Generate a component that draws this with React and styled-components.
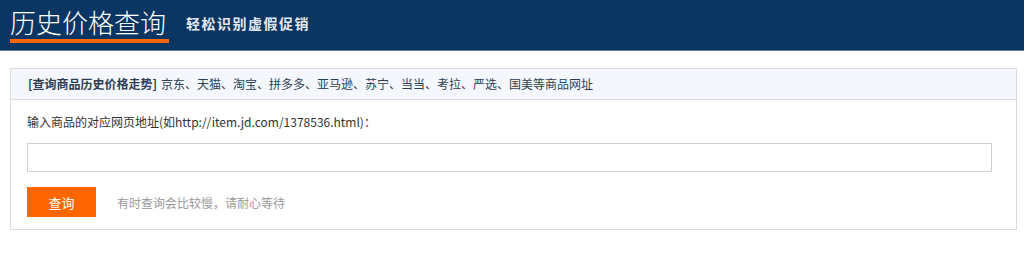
import React from "react";
import styled, { createGlobalStyle } from "styled-components";

const GlobalStyle = createGlobalStyle`
  body {
    margin: 0;
    background: #fff;
    font-family: "Noto Sans CJK SC", "Noto Sans", sans-serif;
    color: #333;
  }
`;

const TopBar = styled.div`
  height: 50px;
  background-color: #0b3562;
  border-bottom: 1px solid #5d7898;
  display: flex;
  align-items: flex-start;
  padding-left: 10px;
`;

const Title = styled.h1`
  margin: 0;
  padding: 7px 3px 2px 0;
  font-size: 26px;
  line-height: 30px;
  font-weight: 300;
  color: #fff;
  border-bottom: 4px solid #ff6600;
`;

const Slogan = styled.span`
  margin: 14px 0 0 17px;
  font-size: 14px;
  line-height: 18px;
  font-weight: 700;
  letter-spacing: 1.5px;
  color: #e4e8ee;
`;

const Panel = styled.div`
  margin: 17px 7px 0 10px;
  border: 1px solid #dcdcdc;
`;

const PanelHead = styled.div`
  height: 30px;
  line-height: 30px;
  padding-left: 17px;
  background-color: #f4f8fc;
  border-bottom: 1px solid #dcdcdc;
  font-size: 12px;
  color: #2c3e55;

  b {
    font-weight: 700;
    margin-right: 4px;
  }
`;

const PanelBody = styled.div`
  padding: 12px 24px 12px 16px;
`;

const Label = styled.div`
  font-size: 12px;
  line-height: 20px;
  color: #333;
`;

const UrlInput = styled.input`
  display: block;
  box-sizing: border-box;
  width: 965px;
  height: 29px;
  margin-top: 11px;
  border: 1px solid #cfcfcf;
  outline: none;
  padding: 0 8px;
  font-size: 12px;
`;

const Actions = styled.div`
  display: flex;
  align-items: center;
  gap: 21px;
  margin-top: 15px;
`;

const QueryBtn = styled.button`
  width: 69px;
  height: 30px;
  border: none;
  background-color: #ff6600;
  color: #fff;
  font-family: inherit;
  font-size: 13px;
  cursor: pointer;
`;

const Hint = styled.span`
  font-size: 12px;
  color: #999;
`;

export default function App() {
  return (
    <>
      <GlobalStyle />
      <TopBar>
        <Title>历史价格查询</Title>
        <Slogan>轻松识别虚假促销</Slogan>
      </TopBar>
      <Panel>
        <PanelHead>
          <b>[查询商品历史价格走势]</b>
          京东、天猫、淘宝、拼多多、亚马逊、苏宁、当当、考拉、严选、国美等商品网址
        </PanelHead>
        <PanelBody>
          <Label>输入商品的对应网页地址(如http://item.jd.com/1378536.html)：</Label>
          <UrlInput type="text" />
          <Actions>
            <QueryBtn>查询</QueryBtn>
            <Hint>有时查询会比较慢，请耐心等待</Hint>
          </Actions>
        </PanelBody>
      </Panel>
    </>
  );
}
